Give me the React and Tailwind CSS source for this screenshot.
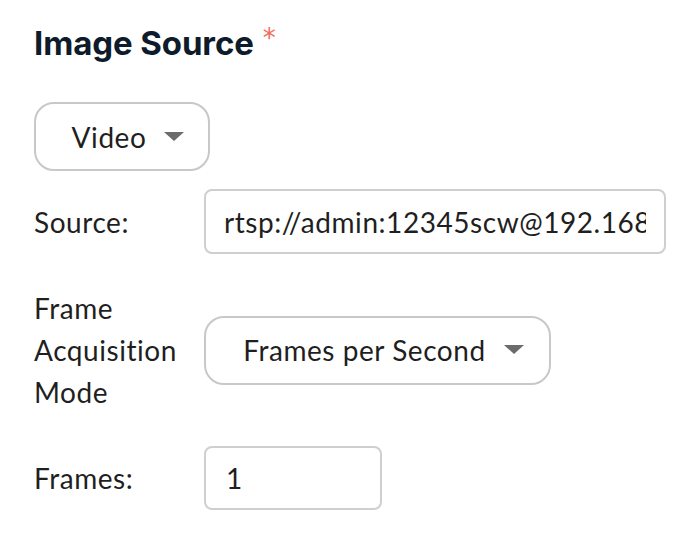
const bodyFont = { fontFamily: "'Lato', 'Open Sans', sans-serif" };

function Caret() {
  return (
    <svg width="20" height="10" viewBox="0 0 20 10" className="shrink-0">
      <path d="M0 0h20L10 9z" fill="#6b6b6b" />
    </svg>
  );
}

export default function App() {
  return (
    <div className="min-h-screen bg-white pl-[34px] pt-[22px] tracking-[0.55px] text-[#1f1f1f]" style={bodyFont}>
      <h2 className="flex items-start text-[33px] font-bold leading-[42px] tracking-[-0.1px] text-[#0d1b2a]" style={{ fontFamily: "'Inter', 'Noto Sans', sans-serif" }}>
        Image Source
        <span className="ml-[9px] mt-[3px] text-[26px] font-normal leading-[26px] text-[#f46a5a]" style={{ fontFamily: "'DejaVu Sans', sans-serif" }}>*</span>
      </h2>

      <div className="mt-[38px]">
        <button className="flex h-[69px] w-[176px] items-center justify-center gap-[18px] rounded-[20px] border-2 border-[#c8c8c8] bg-white pl-[12px] text-[28px]">
          <span>Video</span>
          <Caret />
        </button>
      </div>

      <div className="mt-[18px] flex flex-col gap-[33px]">
        <div className="grid grid-cols-[170px_1fr] items-center">
          <label className="text-[28px] leading-[42px]">Source:</label>
          <input
            readOnly
            value="rtsp://admin:12345scw@192.168.1.64:554/Streaming/Channels/101"
            className="h-[65px] w-[462px] rounded-[8px] border-2 border-[#cfcfcf] px-[18px] text-[28px] tracking-[0.55px] text-[#1f1f1f] outline-none"
            style={bodyFont}
          />
        </div>

        <div className="grid grid-cols-[170px_1fr] items-center">
          <label className="text-[28px] leading-[42px]">
            Frame
            <br />
            Acquisition
            <br />
            Mode
          </label>
          <div>
            <button className="flex h-[69px] w-[347px] items-center justify-center gap-[18px] rounded-[20px] border-2 border-[#c8c8c8] bg-white pl-[12px] text-[28px]">
              <span>Frames per Second</span>
              <Caret />
            </button>
          </div>
        </div>

        <div className="grid grid-cols-[170px_1fr] items-center">
          <label className="text-[28px] leading-[42px]">Frames:</label>
          <input
            readOnly
            value="1"
            className="h-[64px] w-[178px] rounded-[8px] border-2 border-[#cfcfcf] px-[20px] text-[28px] text-[#1f1f1f] outline-none"
            style={bodyFont}
          />
        </div>
      </div>
    </div>
  );
}
